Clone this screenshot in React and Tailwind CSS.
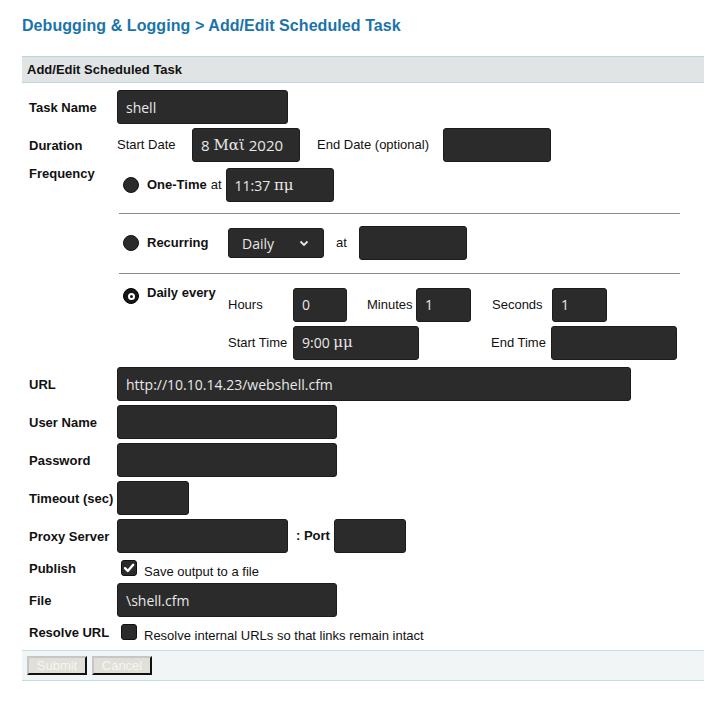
import React from 'react';

const inputFont = { fontFamily: '"Open Sans", "Noto Sans", sans-serif' };

// Greek parts of the values fall back to a serif face in the reference
const Greek = ({ children }) => (
  <span className="text-[15px]" style={{ fontFamily: '"DejaVu Serif", "Liberation Serif", serif' }}>{children}</span>
);

const Field = ({ w, children, className = '' }) => (
  <div
    className={`h-[34px] shrink-0 rounded-[3px] border border-[#1c1c1c] bg-[#2b2b2b] text-[14px] text-[#e8e8e8] flex items-center pl-[8px] whitespace-nowrap ${w} ${className}`}
    style={inputFont}
  >
    {children}
  </div>
);

const Radio = ({ checked }) =>
  checked ? (
    <div className="w-4 h-4 shrink-0 rounded-full bg-[#161616] border border-black flex items-center justify-center">
      <div className="w-[7px] h-[7px] rounded-full border-2 border-white bg-[#161616]" />
    </div>
  ) : (
    <div className="w-4 h-4 shrink-0 rounded-full bg-[#2b2b2b] border border-[#111]" />
  );

const Checkbox = ({ checked }) => (
  <div className="w-4 h-4 shrink-0 rounded-[3px] bg-[#2b2b2b] border border-[#111] flex items-center justify-center">
    {checked && (
      <svg width="12" height="12" viewBox="0 0 12 12">
        <path d="M2 6.2 L4.8 9 L10.2 2.8" fill="none" stroke="white" strokeWidth="2.4" strokeLinecap="round" strokeLinejoin="round" />
      </svg>
    )}
  </div>
);

const Row = ({ label, className = '', labelClass = 'self-center', children }) => (
  <div className={`flex ${className}`}>
    <div className={`w-[95px] shrink-0 pl-[7px] text-[13px] font-bold text-[#111] leading-[15px] ${labelClass}`}>{label}</div>
    <div className="flex-1 min-w-0">{children}</div>
  </div>
);

const Button = ({ children }) => (
  <button className="h-[19px] w-[60px] bg-[#e0e0d8] text-[#f6f6f2] text-[13px] leading-none border-2 border-t-[#c6c6c6] border-l-[#c6c6c6] border-b-[#111] border-r-[#111]">
    {children}
  </button>
);

export default function App() {
  return (
    <div className="min-h-[710px] w-full bg-white text-[#111]" style={{ fontFamily: '"Liberation Sans", Arial, sans-serif' }}>
      <div className="pl-[22px] pt-[17px] h-[56px] text-[16px] tracking-[0.07px] font-bold leading-[18px] text-[#1b73ab]">
        Debugging &amp; Logging &gt; Add/Edit Scheduled Task
      </div>

      <div className="ml-[22px] w-[682px]">
        <div className="h-[27px] border-y border-[#b7d7db] bg-[#e1e4e4] flex items-center pl-[5px] text-[13px] font-bold">
          Add/Edit Scheduled Task
        </div>

        <div className="pt-[7px] pb-[7px]">
          <Row label="Task Name">
            <Field w="w-[171px]">shell</Field>
          </Row>

          <Row label="Duration" className="mt-[4px]">
            <div className="flex items-center text-[13px]">
              <span className="w-[75px]">Start Date</span>
              <Field w="w-[108px]" className="text-[15px]">8&nbsp;<Greek>Μαϊ</Greek>&nbsp;2020</Field>
              <span className="ml-[17px] w-[126px]">End Date (optional)</span>
              <Field w="w-[108px]" />
            </div>
          </Row>

          <Row label="Frequency" className="mt-[4px]" labelClass="self-start">
            <div className="pt-[2px] text-[13px]">
              <div className="flex items-center h-[34px]">
                <div className="ml-[6px]"><Radio /></div>
                <span className="ml-[8px] font-bold">One-Time</span>
                <span className="ml-[4px] mr-[4px]">at</span>
                <Field w="w-[108px]">11:37&nbsp;<Greek>πμ</Greek></Field>
              </div>
              <div className="mt-[11px] ml-[2px] w-[561px] h-px bg-[#8a8a8a]" />
              <div className="mt-[12px] flex items-center h-[34px]">
                <div className="ml-[6px]"><Radio /></div>
                <span className="ml-[8px] w-[81px] font-bold">Recurring</span>
                <div
                  className="h-[30px] w-[96px] shrink-0 rounded-[3px] border border-[#1c1c1c] bg-[#2b2b2b] text-[14px] text-[#e8e8e8] flex items-center justify-between pl-[13px] pr-[14px]"
                  style={inputFont}
                >
                  <span>Daily</span>
                  <svg width="10" height="7" viewBox="0 0 10 7">
                    <path d="M1.5 1.5 L5 5 L8.5 1.5" fill="none" stroke="#e8e8e8" strokeWidth="1.8" />
                  </svg>
                </div>
                <span className="ml-[12px] w-[23px]">at</span>
                <Field w="w-[108px]" />
              </div>
              <div className="mt-[13px] ml-[2px] w-[561px] h-px bg-[#8a8a8a]" />
              <div className="mt-[13px] flex items-start">
                <div className="w-[111px] shrink-0 flex items-start">
                  <div className="ml-[6px] mt-[1px]"><Radio checked /></div>
                  <span className="ml-[8px] font-bold leading-[12px]">Daily every</span>
                </div>
                <div>
                  <div className="flex items-center h-[34px] pt-[1px]">
                    <span className="w-[65px]">Hours</span>
                    <Field w="w-[54px]">0</Field>
                    <span className="ml-[20px] w-[49px]">Minutes</span>
                    <Field w="w-[55px]">1</Field>
                    <span className="ml-[21px] w-[60px]">Seconds</span>
                    <Field w="w-[55px]">1</Field>
                  </div>
                  <div className="mt-[4px] flex items-center h-[34px] pt-[1px]">
                    <span className="w-[65px]">Start Time</span>
                    <Field w="w-[126px]">9:00&nbsp;<Greek>μμ</Greek></Field>
                    <span className="ml-[72px] w-[60px]">End Time</span>
                    <Field w="w-[126px]" />
                  </div>
                </div>
              </div>
            </div>
          </Row>

          <Row label="URL" className="mt-[8px]">
            <Field w="w-[514px]">http://10.10.14.23/webshell.cfm</Field>
          </Row>
          <Row label="User Name" className="mt-[4px]">
            <Field w="w-[220px]" />
          </Row>
          <Row label="Password" className="mt-[4px]">
            <Field w="w-[220px]" />
          </Row>
          <Row label="Timeout (sec)" className="mt-[4px]">
            <Field w="w-[72px]" />
          </Row>
          <Row label="Proxy Server" className="mt-[4px]">
            <div className="flex items-center">
              <Field w="w-[171px]" />
              <span className="ml-[8px] w-[38px] text-[13px] font-bold">: Port</span>
              <Field w="w-[72px]" />
            </div>
          </Row>
          <Row label="Publish" className="mt-[4px] h-[22px]">
            <div className="flex items-center h-[22px]">
              <div className="ml-[4px]"><Checkbox checked /></div>
              <span className="ml-[7px] mt-[8px] text-[13px]">Save output to a file</span>
            </div>
          </Row>
          <Row label="File" className="mt-[4px]">
            <Field w="w-[220px]">\shell.cfm</Field>
          </Row>
          <Row label="Resolve URL" className="mt-[4px] h-[22px]">
            <div className="flex items-center h-[22px]">
              <div className="ml-[4px]"><Checkbox /></div>
              <span className="ml-[7px] mt-[8px] text-[13px]">Resolve internal URLs so that links remain intact</span>
            </div>
          </Row>
        </div>

        <div className="h-[31px] border-y border-[#c2dee0] bg-[#f1f5f5] flex items-center gap-[5px] pl-[5px]">
          <Button>Submit</Button>
          <Button>Cancel</Button>
        </div>
      </div>
    </div>
  );
}
